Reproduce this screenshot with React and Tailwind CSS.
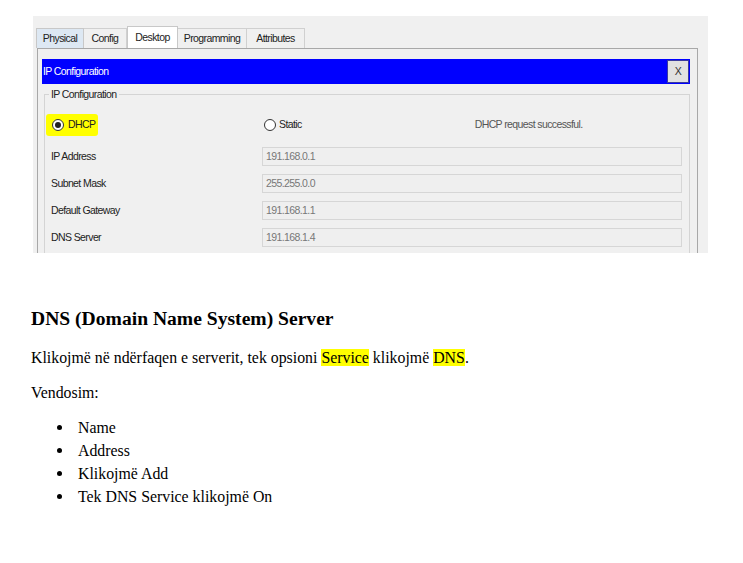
const tabs = ["Physical", "Config", "Desktop", "Programming", "Attributes"];

const rows = [
  ["IP Address", "191.168.0.1"],
  ["Subnet Mask", "255.255.0.0"],
  ["Default Gateway", "191.168.1.1"],
  ["DNS Server", "191.168.1.4"],
];

const tabWidths = {
  Physical: "w-[48px]",
  Config: "w-[43px]",
  Desktop: "w-[51px]",
  Programming: "w-[69px]",
  Attributes: "w-[58px]",
};

const Radio = ({ checked }) => (
  <span className="w-[12px] h-[12px] rounded-full border border-[#333] bg-white flex items-center justify-center">
    {checked && <span className="w-[6px] h-[6px] rounded-full bg-[#222]" />}
  </span>
);

const Screenshot = () => (
  <div
    className="ml-[33px] mt-[16px] w-[675px] h-[237px] overflow-hidden bg-[#f0f0f0] text-[10.5px] tracking-[-0.6px] text-[#222]"
    style={{ fontFamily: '"Liberation Sans", Arial, sans-serif' }}
  >
    <div className="flex items-end h-[32px] pl-[3px]">
      {tabs.map((t) => (
        <div
          key={t}
          className={
            t === "Desktop"
              ? `${tabWidths[t]} h-[22px] bg-white border border-b-0 border-[#c8c8c8] flex items-center justify-center`
              : t === "Physical"
              ? `${tabWidths[t]} h-[20px] bg-[#dde8f3] border border-b-0 border-[#c8c8c8] flex items-center justify-center`
              : `${tabWidths[t]} h-[20px] bg-[#f0f0f0] border border-b-0 border-l-0 border-[#d0d0d0] flex items-center justify-center`
          }
        >
          {t}
        </div>
      ))}
    </div>
    <div className="ml-[4px] w-[661px] h-[205px] border border-b-0 border-[#a8a8a8] bg-[#f0f0f0] pt-[10px] pl-[4px]">
      <div className="w-[648px] h-[25px] bg-[#0000ff] flex items-center justify-between pr-[1px]">
        <span className="text-white pl-[1px]">IP Configuration</span>
        <span className="w-[22px] h-[23px] bg-[#e1e1e1] border border-[#3a3aa0] flex items-center justify-center text-[#333]">
          X
        </span>
      </div>
      <div className="relative mt-[10px] ml-[2px] w-[646px] h-[170px] border border-b-0 border-[#d4d4d4]">
        <span className="absolute -top-[8px] left-[4px] bg-[#f0f0f0] px-[2px] leading-[14px]">
          IP Configuration
        </span>
        <div className="flex items-center h-[22px] mt-[19px]">
          <div className="ml-[1px] w-[52px] h-[22px] bg-[#ffff00] rounded-[3px] flex items-center gap-[4px] pl-[6px]">
            <Radio checked />
            <span>DHCP</span>
          </div>
          <div className="ml-[166px] flex items-center gap-[3px]">
            <Radio />
            <span>Static</span>
          </div>
          <span className="ml-[173px] text-[#555]">DHCP request successful.</span>
        </div>
        <div className="flex flex-col gap-[8px] mt-[11px]">
          {rows.map(([label, value]) => (
            <div key={label} className="flex items-center h-[19px]">
              <span className="w-[217px] pl-[6px]">{label}</span>
              <div className="w-[420px] h-[19px] border border-[#d6d6d6] bg-[#efefef] flex items-center pl-[3px] text-[#777]">
                {value}
              </div>
            </div>
          ))}
        </div>
      </div>
    </div>
  </div>
);

const App = () => {
  return (
    <div
      className="w-[743px] h-[563px] bg-white text-black"
      style={{ fontFamily: '"Liberation Serif", "Times New Roman", serif' }}
    >
      <Screenshot />
      <div className="pl-[31px] pt-[55px]">
        <h2 className="text-[19.6px] font-bold leading-[22px]">DNS (Domain Name System) Server</h2>
        <p className="mt-[18px] text-[15.85px] leading-[20px]">
          Klikojmë në ndërfaqen e serverit, tek opsioni{" "}
          <span className="bg-[#ffff00]">Service</span> klikojmë{" "}
          <span className="bg-[#ffff00]">DNS</span>.
        </p>
        <p className="mt-[15px] text-[15.85px] leading-[20px]">Vendosim:</p>
        <ul className="mt-[13px] text-[15.85px] leading-[23px]">
          {["Name", "Address", "Klikojmë Add", "Tek DNS Service klikojmë On"].map((item) => (
            <li key={item} className="flex items-center">
              <span className="w-[47px] pl-[26px] flex items-center">
                <span className="w-[5px] h-[5px] rounded-full bg-black" />
              </span>
              <span>{item}</span>
            </li>
          ))}
        </ul>
      </div>
    </div>
  );
};

export default App;
